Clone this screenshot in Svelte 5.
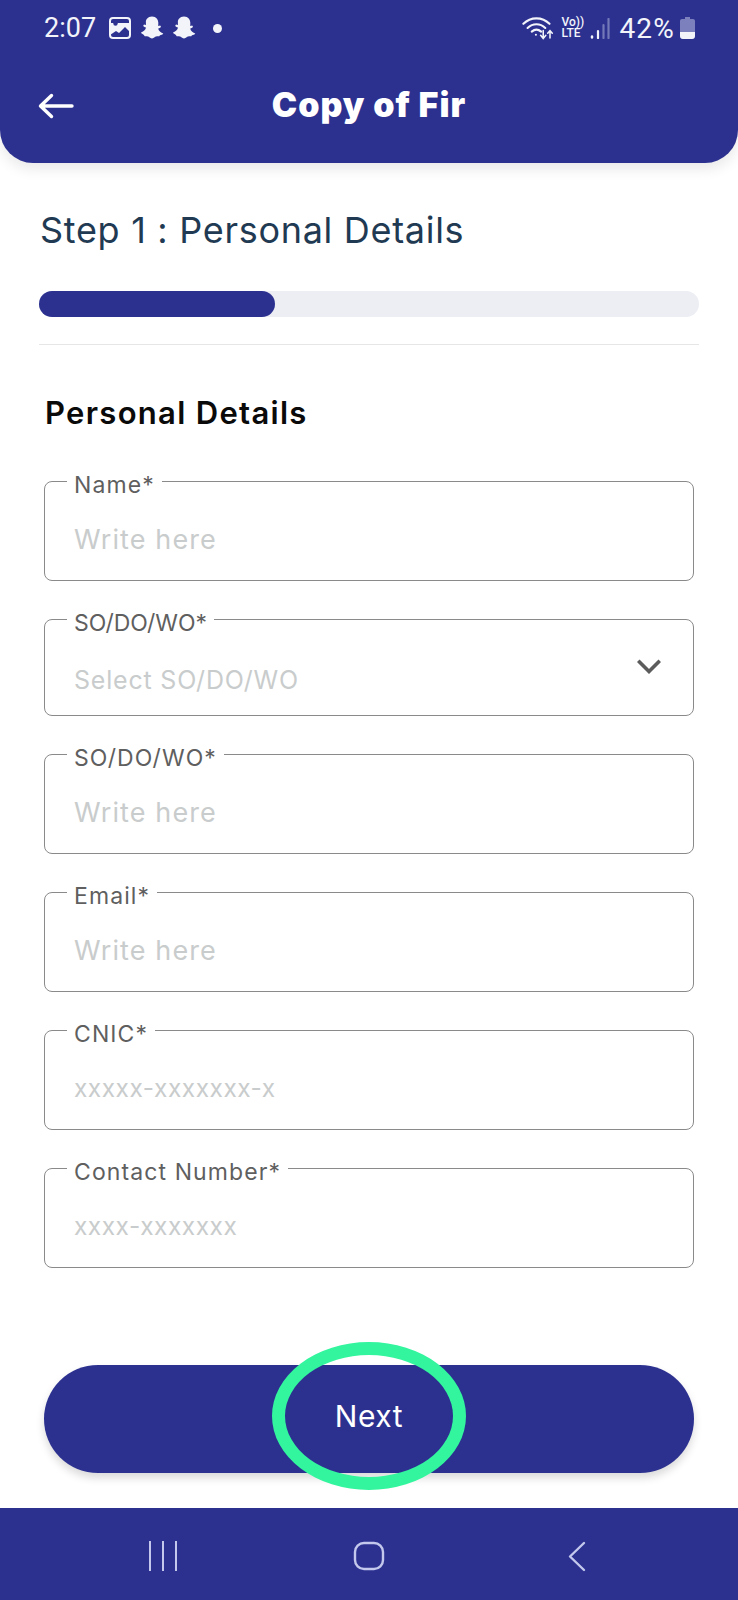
<script>
  const fields = [
    { label: 'Name*', hint: 'Write here' },
    { label: 'SO/DO/WO*', hint: 'Select SO/DO/WO', select: true },
    { label: 'SO/DO/WO*', hint: 'Write here' },
    { label: 'Email*', hint: 'Write here' },
    { label: 'CNIC*', hint: 'xxxxx-xxxxxxx-x', small: true },
    { label: 'Contact Number*', hint: 'xxxx-xxxxxxx', small: true }
  ];
</script>

<div class="page">
  <header class="header">
    <div class="status">
      <div class="status-left">
        <span class="clock">2:07</span>
        <svg class="i-image" viewBox="0 0 22 22"><rect x="1" y="1" width="20" height="20" rx="3" fill="none" stroke="#f2f4fa" stroke-width="2"/><path d="M1 6h20v9l-5-5-6 6-3-2-6 4z" fill="#f2f4fa"/><circle cx="6.5" cy="6.5" r="2.2" fill="#2c3190"/></svg>
        <svg class="i-ghost" viewBox="0 0 24 24"><path d="M12 0.5c4.3 0 6.3 3.3 6.3 6.3 0 1.300 0 2.400-.1 3.200l2-.5.8 1.200c-.5 1-2 1.500-2.800 2 .7 2.500 3 3.800 5 4.800-.2 1-1.600 1.400-3.300 1.700-.4 1.200-1 1.200-2.400 1.100-2.400-.2-3.200 2.200-5.500 2.200s-3.100-2.400-5.500-2.200c-1.400.1-2 .1-2.400-1.100C2.600 17.900 1.200 17.500 1 16.500c2-1 4.300-2.300 5-4.800-.8-.5-2.300-1-2.800-2l.8-1.200 2 .5c-.1-.8-.1-1.900-.1-3.200C5.700 3.800 7.700.5 12 .5z" fill="#f2f4fa"/></svg>
        <svg class="i-ghost" viewBox="0 0 24 24"><path d="M12 0.5c4.300 0 6.300 3.300 6.300 6.300 0 1.300 0 2.400-.1 3.200l2-.5.8 1.200c-.5 1-2 1.500-2.800 2 .7 2.500 3 3.800 5 4.800-.2 1-1.600 1.400-3.300 1.700-.4 1.200-1 1.200-2.400 1.100-2.400-.2-3.200 2.200-5.500 2.200s-3.100-2.400-5.500-2.200c-1.400.1-2 .1-2.400-1.100C2.600 17.900 1.200 17.500 1 16.500c2-1 4.300-2.300 5-4.800-.8-.5-2.300-1-2.800-2l.8-1.200 2 .5c-.1-.8-.1-1.900-.1-3.200C5.700 3.800 7.700.5 12 .5z" fill="#f2f4fa"/></svg>
        <span class="dot"></span>
      </div>
      <div class="status-right">
        <svg class="i-wifi" viewBox="0 0 30 23" fill="none" stroke="#f2f4fa" stroke-linecap="round"><path d="M1 7.500C8 .5 19 .5 26 7.500" stroke-width="2"/><path d="M5 11.500c5-4.800 12-4.800 17 0" stroke-width="2"/><path d="M9 15c3-2.600 6-2.600 9 0" stroke-width="2"/><circle cx="13" cy="18" r="1" fill="#f2f4fa" stroke="none"/><path d="M20 14v7M17.500 18.500l2.500 3 2.500-3M26.500 21v-7M24.300 16.500l2.200-2.500 2.200 2.500" stroke-width="1.500"/></svg>
        <span class="volte"><span>Vo))</span><span>LTE</span></span>
        <svg class="i-signal" viewBox="0 0 20 21" stroke-linecap="round"><path d="M2 18.500v1" stroke="#f2f4fa" stroke-width="2.400"/><path d="M8 13v7" stroke="#f2f4fa" stroke-width="2.200"/><path d="M13.500 7v13M18.500 1v19" stroke="#7378b8" stroke-width="2.200"/></svg>
        <span class="percent">42%</span>
        <svg class="i-battery" viewBox="0 0 15 22"><path d="M5 0h5v2h3c1.100 0 2 .9 2 2v15c0 1.700-1.300 3-3 3H3c-1.700 0-3-1.300-3-3V4c0-1.100.9-2 2-2h3z" fill="#7c80bd"/><path d="M0 15h15v4c0 1.700-1.300 3-3 3H3c-1.700 0-3-1.300-3-3z" fill="#f2f4fa"/></svg>
      </div>
    </div>
    <div class="titlebar">
      <svg class="i-back" viewBox="0 0 36 26" fill="none" stroke="#fff" stroke-width="3.400" stroke-linecap="round" stroke-linejoin="round"><path d="M34 13H3M13.500 2.500 2.500 13l11 10.500"/></svg>
      <h1>Copy of Fir</h1>
    </div>
  </header>

  <main class="content">
    <h2 class="step">Step 1 : Personal Details</h2>
    <div class="track"><div class="fill"></div></div>
    <hr class="rule" />
    <h3 class="section">Personal Details</h3>

    <div class="fields">
      {#each fields as f}
        <div class="field" class:select={f.select}>
          <span class="label">{f.label}</span>
          <span class="hint" class:small={f.small}>{f.hint}</span>
          {#if f.select}
            <svg class="chev" viewBox="0 0 24 16" fill="none" stroke="#5c5c5c" stroke-width="3.600" stroke-linecap="square"><path d="M2.500 3 12 12.500 21.500 3"/></svg>
          {/if}
        </div>
      {/each}
    </div>

    <div class="actions">
      <button class="next" type="button">Next</button>
      <span class="ring"></span>
    </div>
  </main>

  <nav class="nav">
    <svg class="n-recent" viewBox="0 0 28 30" stroke="#c3c8ec" stroke-width="2"><path d="M1 0v30M14 0v30M27 0v30"/></svg>
    <svg class="n-home" viewBox="0 0 32 30" fill="none" stroke="#c3c8ec" stroke-width="2.400"><rect x="2" y="2" width="28" height="26" rx="9"/></svg>
    <svg class="n-back" viewBox="0 0 18 31" fill="none" stroke="#c3c8ec" stroke-width="2.400" stroke-linecap="round" stroke-linejoin="round"><path d="M16 2 2 15.500 16 29"/></svg>
  </nav>
</div>

<style>
  :global(body) { margin: 0; background: #fff; }
  .page {
    width: 738px; height: 1600px; display: flex; flex-direction: column;
    background: #fff; overflow: hidden;
    font-family: Inter, "Liberation Sans", sans-serif;
  }
  .header {
    height: 163px; box-sizing: border-box; background: #2c3190;
    border-radius: 0 0 33px 33px; box-shadow: 0 6px 14px rgba(0,0,0,.09);
    padding: 14px 44px 0; flex: none; position: relative; z-index: 1;
  }
  .status { display: flex; justify-content: space-between; align-items: center; height: 28px; color: #f2f4fa; font-family: Roboto, sans-serif; }
  .status-left, .status-right { display: flex; align-items: center; }
  .clock { font-size: 27px; font-weight: 400; width: 53px; margin-right: 12px; }
  .i-image { width: 22px; height: 22px; margin-right: 9px; }
  .i-ghost { width: 24px; height: 24px; margin-right: 8px; }
  .dot { width: 9px; height: 9px; border-radius: 50%; background: #f2f4fa; margin-left: 9px; }
  .status-right { margin-right: -1px; }
  .i-wifi { width: 32px; height: 24px; margin-right: 7px; }
  .volte { display: flex; flex-direction: column; font-size: 12px; line-height: 11px; font-weight: 500; width: 22px; margin-right: 7px; }
  .i-signal { width: 20px; height: 21px; margin-right: 9px; }
  .percent { font-size: 28px; font-weight: 400; letter-spacing: 1.2px; margin-right: 5px; }
  .i-battery { width: 15px; height: 22px; }
  .titlebar { display: flex; justify-content: center; align-items: center; position: relative; height: 60px; margin-top: 32px; }
  .i-back { position: absolute; left: -6px; top: 19px; width: 36px; height: 26px; }
  h1 { margin: 0; color: #fff; font-size: 34px; font-weight: 900; letter-spacing: 1px; }

  .content { flex: 1; padding: 0 44px; position: relative; min-height: 0; display: flex; flex-direction: column; }
  .step { margin: 45px 0 0 -4px; font-size: 36px; line-height: 44px; font-weight: 400; color: #1f3a52; letter-spacing: .7px; }
  .track { margin: 39px -5px 0 -5px; height: 26px; border-radius: 13px; background: #eceef4; }
  .fill { width: 236px; height: 100%; border-radius: 13px; background: #2c3190; }
  .rule { margin: 27px -5px 0 -5px; border: 0; height: 1px; background: #e6e6e6; }
  .section { margin: 48px 0 0 1px; font-size: 31px; line-height: 40px; font-weight: 600; color: #0a0a0a; letter-spacing: 1.3px; }

  .fields { margin-top: 48px; display: flex; flex-direction: column; gap: 38px; }
  .field {
    height: 100px; box-sizing: border-box; border: 1.4px solid #8a8a8a; border-radius: 8px;
    position: relative; padding: 0 29px; display: flex; align-items: center;
  }
  .field.select { height: 97px; }
  .label {
    position: absolute; left: 22px; top: -10px; padding: 0 7px; background: #fff;
    font-size: 23px; line-height: 26px; color: #5f5f5f; letter-spacing: 1.1px;
  }
  .select .label { letter-spacing: 0; }
  .hint { font-size: 27px; color: #c9cccc; margin-top: 16px; letter-spacing: 1.1px; }
  .hint.small { font-size: 24.5px; margin-top: 15px; letter-spacing: .5px; }
  .select .hint { font-size: 25px; margin-top: 24px; letter-spacing: .8px; }
  .chev { position: absolute; right: 32px; top: 39px; width: 24px; height: 16px; }

  .actions { position: relative; margin-top: 97px; height: 108px; }
  .next {
    width: 100%; height: 100%; border: 0; border-radius: 54px; background: #2c3190; color: #fff;
    font: 400 30px Inter, sans-serif; letter-spacing: .6px; box-shadow: 0 5px 8px rgba(0,0,0,.15); padding: 0 0 6px;
  }
  .ring {
    position: absolute; left: 228px; top: -23px; width: 194px; height: 148px; box-sizing: border-box;
    border: 13px solid #33f59e; border-radius: 50%; pointer-events: none;
  }

  .nav { height: 92px; flex: none; background: #2c3190; position: relative; display: flex; align-items: flex-start; padding-top: 33px; box-sizing: border-box; }
  .n-recent { width: 28px; height: 30px; margin-left: 149px; }
  .n-home { width: 32px; height: 30px; margin-left: 176px; }
  .n-back { width: 18px; height: 31px; margin-left: 183px; }
</style>
